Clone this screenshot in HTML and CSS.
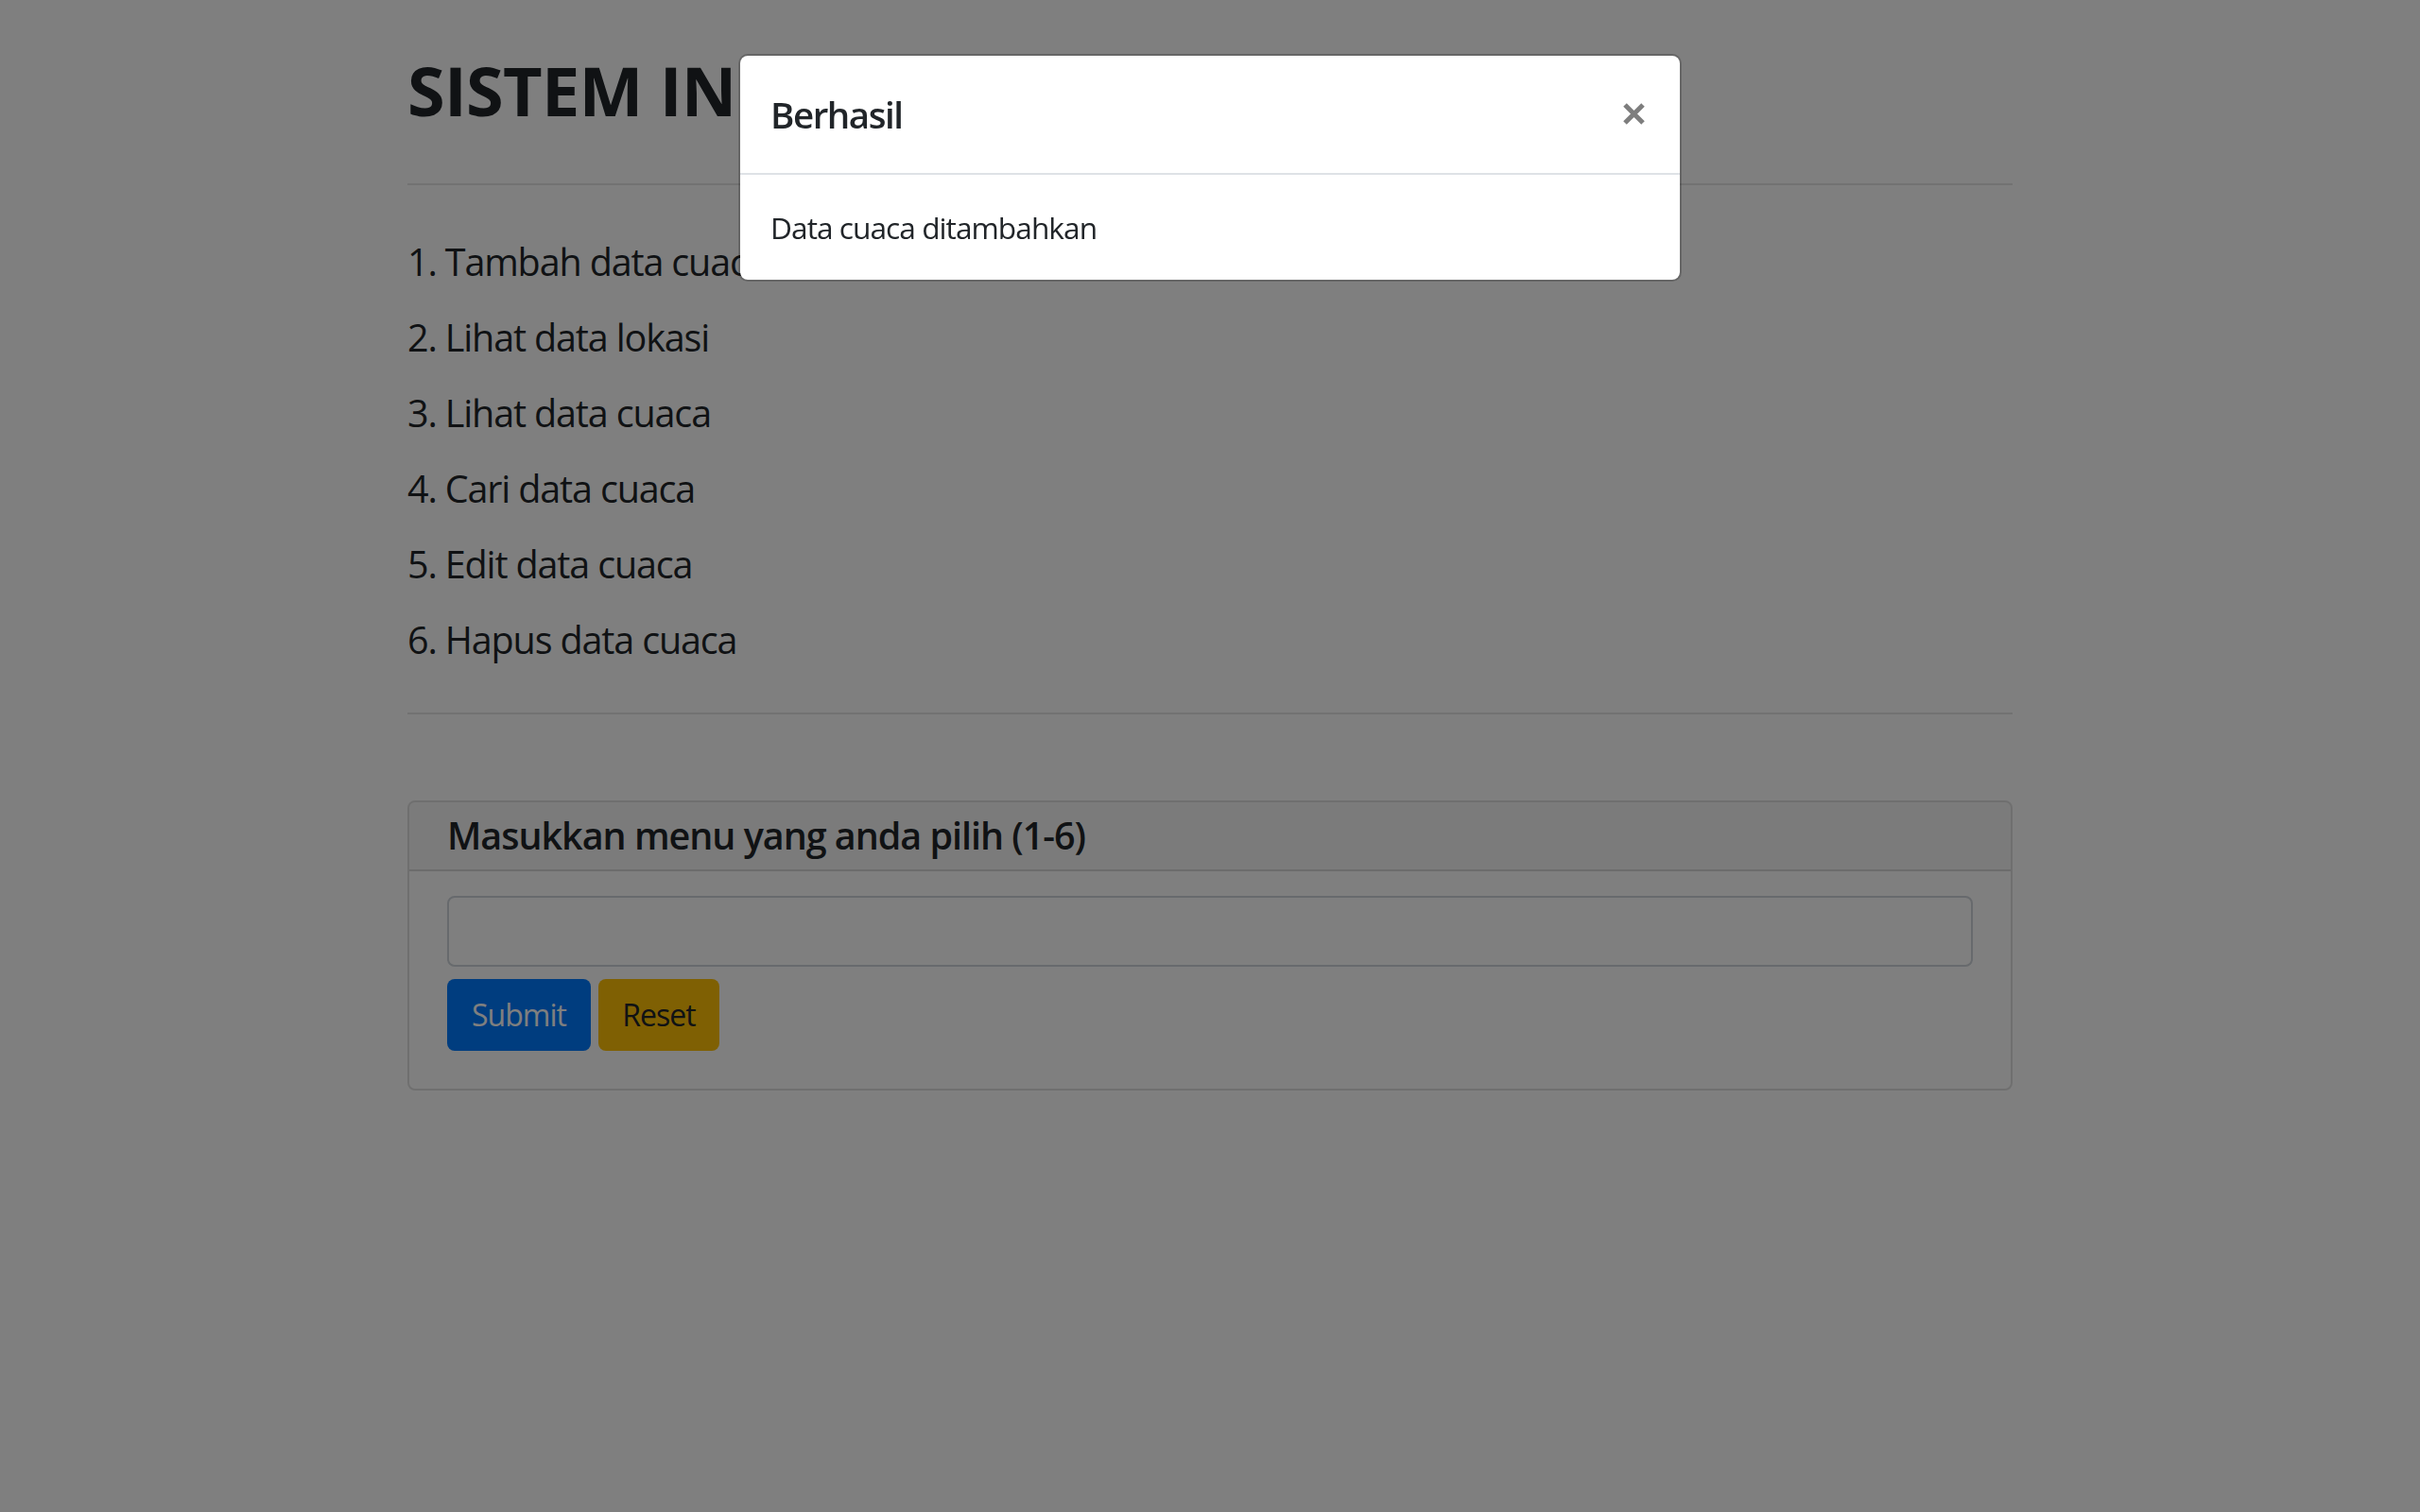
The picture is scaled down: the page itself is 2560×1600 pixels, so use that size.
FILE: index.html
```html
<!DOCTYPE html>
<html lang="id">
<head>
<meta charset="utf-8">
<title>Sistem Informasi Cuaca</title>
<link rel="stylesheet" href="styles.css">
</head>
<body>
<div class="container">
  <h1 class="title">SISTEM INFORMASI CUACA</h1>
  <hr class="divider">
  <ul class="menu">
    <li>1. Tambah data cuaca</li>
    <li>2. Lihat data lokasi</li>
    <li>3. Lihat data cuaca</li>
    <li>4. Cari data cuaca</li>
    <li>5. Edit data cuaca</li>
    <li>6. Hapus data cuaca</li>
  </ul>
  <hr class="divider divider-bottom">
  <div class="card">
    <div class="card-header">Masukkan menu yang anda pilih (1-6)</div>
    <div class="card-body">
      <input class="form-input" type="text">
      <div class="actions">
        <button class="btn btn-primary" type="button">Submit</button>
        <button class="btn btn-warning" type="button">Reset</button>
      </div>
    </div>
  </div>
</div>

<div class="backdrop"></div>
<div class="modal">
  <div class="modal-dialog">
    <div class="modal-header">
      <h5 class="modal-title">Berhasil</h5>
      <button class="close" type="button" aria-label="Close">
        <svg width="23" height="23" viewBox="0 0 23 23" aria-hidden="true">
          <path d="M2 2 L21 21 M21 2 L2 21" stroke="#000" stroke-width="5" fill="none"/>
        </svg>
      </button>
    </div>
    <div class="modal-body">Data cuaca ditambahkan</div>
  </div>
</div>
</body>
</html>
```

FILE: styles.css
```css
* { box-sizing: border-box; }

html, body {
  margin: 0;
  padding: 0;
  background: #fff;
  color: #212529;
  font-family: "Open Sans", "Noto Sans", sans-serif;
}

.container {
  width: 1698px;
  margin: 0 auto;
  padding-top: 54px;
}

.title {
  margin: 0;
  font-size: 72px;
  font-weight: 700;
  line-height: 82px;
  letter-spacing: -0.01em;
}

.divider {
  margin: 58px 0 0;
  border: 0;
  border-top: 2px solid rgba(0, 0, 0, 0.1);
  height: 0;
}

.divider-bottom {
  margin-top: 38px;
}

.menu {
  list-style: none;
  margin: 40px 0 0;
  padding: 0;
  font-size: 39.5px;
  line-height: 80px;
  letter-spacing: -0.029em;
}

.menu li {
  padding-top: 1px;
  height: 80px;
}

.card {
  margin-top: 91px;
  border: 2px solid rgba(0, 0, 0, 0.125);
  border-radius: 8px;
  overflow: hidden;
}

.card-header {
  height: 73px;
  padding: 0 40px;
  line-height: 71px;
  font-size: 39.5px;
  font-weight: 600;
  letter-spacing: -0.026em;
  background: rgba(0, 0, 0, 0.03);
  border-bottom: 2px solid rgba(0, 0, 0, 0.125);
}

.card-body {
  padding: 26px 40px 40px;
}

.form-input {
  display: block;
  width: 100%;
  height: 75px;
  border: 2px solid #ced4da;
  border-radius: 8px;
  background: #fff;
  font-size: 32px;
  padding: 0 24px;
}

.actions {
  display: flex;
  gap: 8px;
  margin-top: 13px;
}

.btn {
  height: 76px;
  border: 0;
  border-radius: 8px;
  font-family: inherit;
  letter-spacing: -0.03em;
  font-size: 32px;
  line-height: 76px;
  padding: 0;
  text-align: center;
}

.btn-primary {
  width: 152px;
  background: #007bff;
  color: #fff;
}

.btn-warning {
  width: 128px;
  background: #ffc107;
  color: #212529;
}

.backdrop {
  position: fixed;
  inset: 0;
  background: rgba(0, 0, 0, 0.5);
}

.modal {
  position: fixed;
  inset: 0;
}

.modal-dialog {
  width: 998px;
  margin: 57px auto 0;
  background: #fff;
  background-clip: padding-box;
  border: 2px solid rgba(0, 0, 0, 0.2);
  border-radius: 10px;
}

.modal-header {
  display: flex;
  align-items: center;
  padding: 32px;
  border-bottom: 2px solid #dee2e6;
}

.modal-title {
  margin: 0;
  font-size: 38.5px;
  font-weight: 600;
  line-height: 60px;
  letter-spacing: -0.038em;
}

.close {
  margin-left: auto;
  margin-right: 5px;
  padding: 0;
  border: 0;
  background: transparent;
  opacity: 0.5;
  display: flex;
  margin-top: -1px;
}

.modal-body {
  padding: 32px 32px 31px;
  font-size: 31.7px;
  line-height: 48px;
  letter-spacing: -0.031em;
}
```
